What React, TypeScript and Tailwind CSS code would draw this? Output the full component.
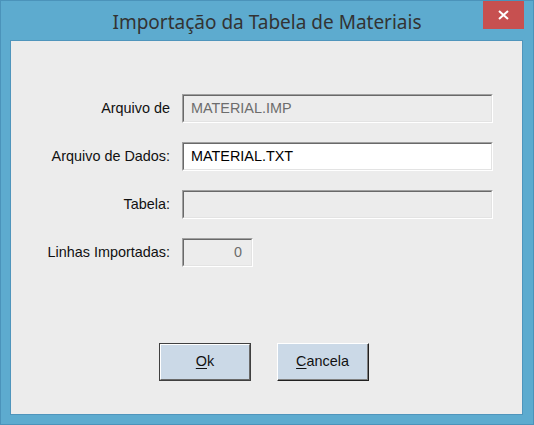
import React from "react";

function Sunken({ className = "", bg = "bg-[#ececec]", children }: { className?: string; bg?: string; children?: React.ReactNode }) {
  return (
    <div className={`border-t border-l border-t-[#a0a0a0] border-l-[#a0a0a0] border-b border-r border-b-white border-r-white ${className}`}>
      <div className={`h-full border-t border-l border-t-[#696969] border-l-[#696969] border-b border-r border-b-[#e3e3e3] border-r-[#e3e3e3] ${bg} flex items-center`}>
        {children}
      </div>
    </div>
  );
}

function Row({ label, children }: { label: string; children: React.ReactNode }) {
  return (
    <div className="flex items-center h-[29px]">
      <div className="w-[159px] text-right text-[14.4px] text-[#111] leading-none">{label}</div>
      <div className="ml-[12px]">{children}</div>
    </div>
  );
}

export default function App() {
  return (
    <div
      className="w-[534px] h-[425px] bg-[#5dabcf] border border-[#4b93ba] flex flex-col"
      style={{ fontFamily: '"Liberation Sans", Arial, sans-serif' }}
    >
      <div className="relative h-[39px] flex items-center justify-center shrink-0">
        <span
          className="text-[19px] text-[#333] mt-[3px]"
          style={{ fontFamily: '"Noto Sans", "Open Sans", sans-serif' }}
        >
          Importação da Tabela de Materiais
        </span>
        <div className="absolute right-[9px] top-0 w-[41px] h-[28px] bg-[#c75050] flex items-center justify-center">
          <svg width="11" height="10" viewBox="0 0 11 10">
            <path d="M1 1 L10 9 M10 1 L1 9" stroke="white" strokeWidth="2" />
          </svg>
        </div>
      </div>
      <div className="ml-[9px] mr-[10px] mb-[9px] flex-1 border border-[#4f95bc]">
        <div className="h-full bg-[#ececec] flex flex-col pt-[53px]">
          <div className="flex flex-col gap-[19px]">
            <Row label="Arquivo de">
              <Sunken className="w-[311px] h-[29px]">
                <span className="pl-[7px] text-[14.4px] text-[#6d6d6d]">MATERIAL.IMP</span>
              </Sunken>
            </Row>
            <Row label="Arquivo de Dados:">
              <Sunken className="w-[311px] h-[29px]" bg="bg-white">
                <span className="pl-[7px] text-[14.4px] text-black">MATERIAL.TXT</span>
              </Sunken>
            </Row>
            <Row label="Tabela:">
              <Sunken className="w-[311px] h-[29px]" />
            </Row>
            <Row label="Linhas Importadas:">
              <Sunken className="w-[71px] h-[29px]">
                <span className="flex-1 text-right pr-[9px] text-[14.4px] text-[#6d6d6d]">0</span>
              </Sunken>
            </Row>
          </div>
          <div className="flex gap-[26px] pl-[148px] mt-[76px]">
            <div className="w-[92px] h-[38px] border border-[#404040]">
              <div className="h-full border-t border-l border-t-white border-l-white border-b border-r border-b-[#696969] border-r-[#696969] bg-[#cbd9e7] flex items-center justify-center text-[14.4px] text-[#111]">
                <span><span className="underline underline-offset-2">O</span>k</span>
              </div>
            </div>
            <div className="w-[92px] h-[38px] border-t border-l border-t-white border-l-white border-b border-r border-b-[#202020] border-r-[#202020]">
              <div className="h-full border-b border-r border-b-[#808080] border-r-[#808080] bg-[#cbd9e7] flex items-center justify-center text-[14.4px] text-[#111]">
                <span><span className="underline underline-offset-2">C</span>ancela</span>
              </div>
            </div>
          </div>
        </div>
      </div>
    </div>
  );
}
